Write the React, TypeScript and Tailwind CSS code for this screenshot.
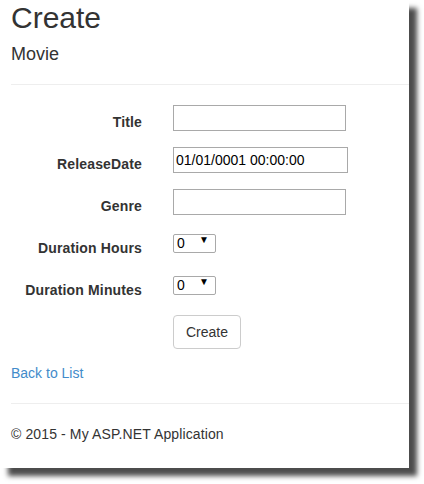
import React from 'react';

const font = { fontFamily: '"Liberation Sans", Arial, Helvetica, sans-serif' };

function Field({ label, children }: { label: string; children: React.ReactNode }) {
  return (
    <div className="flex items-start mb-[15px]">
      <label className="w-[131px] pt-[7px] text-right text-[14px] leading-[20px] font-bold text-[#333] tracking-[0.15px]">
        {label}
      </label>
      <div className="ml-[31px]">{children}</div>
    </div>
  );
}

function TextBox({ value = '', wide = false }: { value?: string; wide?: boolean }) {
  return (
    <input
      type="text"
      defaultValue={value}
      className={`${wide ? 'w-[175px]' : 'w-[173px]'} h-[26px] border border-[#a9a9a9] px-[2px] text-[14px] text-black outline-none`}
      style={font}
    />
  );
}

function Dropdown() {
  return (
    <div className="relative w-[43px] h-[19px]">
      <select
        className="appearance-none w-full h-full border border-[#a9a9a9] rounded-[2px] bg-white pl-[3px] text-[14px] leading-[17px] text-black outline-none"
        style={font}
        defaultValue="0"
      >
        {Array.from({ length: 10 }, (_, i) => (
          <option key={i} value={String(i)}>
            {i}
          </option>
        ))}
      </select>
      <span className="pointer-events-none absolute left-[26px] top-[2px] text-[10px] leading-[14px] text-black">
        ▼
      </span>
    </div>
  );
}

export default function App() {
  return (
    <div className="w-[424px] h-[484px] bg-white overflow-hidden" style={font}>
      <div className="w-[409px] h-[468px] bg-white shadow-[8px_8px_5px_rgba(0,0,0,0.7)] pl-[11px] pt-px text-[#333]">
        <h2 className="text-[30px] leading-[33px] font-normal">Create</h2>
        <h4 className="mt-[10px] text-[18px] leading-[20px] font-normal">Movie</h4>
        <hr className="mt-[20px] mb-[20px] border-t border-[#eee]" />

        <Field label="Title">
          <TextBox />
        </Field>
        <Field label="ReleaseDate">
          <TextBox value="01/01/0001 00:00:00" wide />
        </Field>
        <Field label="Genre">
          <TextBox />
        </Field>
        <Field label="Duration Hours">
          <Dropdown />
        </Field>
        <Field label="Duration Minutes">
          <Dropdown />
        </Field>

        <div className="ml-[162px] mb-[14px]">
          <button
            type="button"
            className="h-[34px] px-[12px] border border-[#ccc] rounded-[4px] bg-white text-[14px] leading-[20px] text-[#333]"
            style={font}
          >
            Create
          </button>
        </div>

        <div className="text-[14px] leading-[20px]">
          <a href="#" className="text-[#428bca]">
            Back to List
          </a>
        </div>

        <hr className="mt-[20px] mb-[20px] border-t border-[#eee]" />
        <p className="text-[14px] leading-[20px] tracking-[0.12px]">© 2015 - My ASP.NET Application</p>
      </div>
    </div>
  );
}
